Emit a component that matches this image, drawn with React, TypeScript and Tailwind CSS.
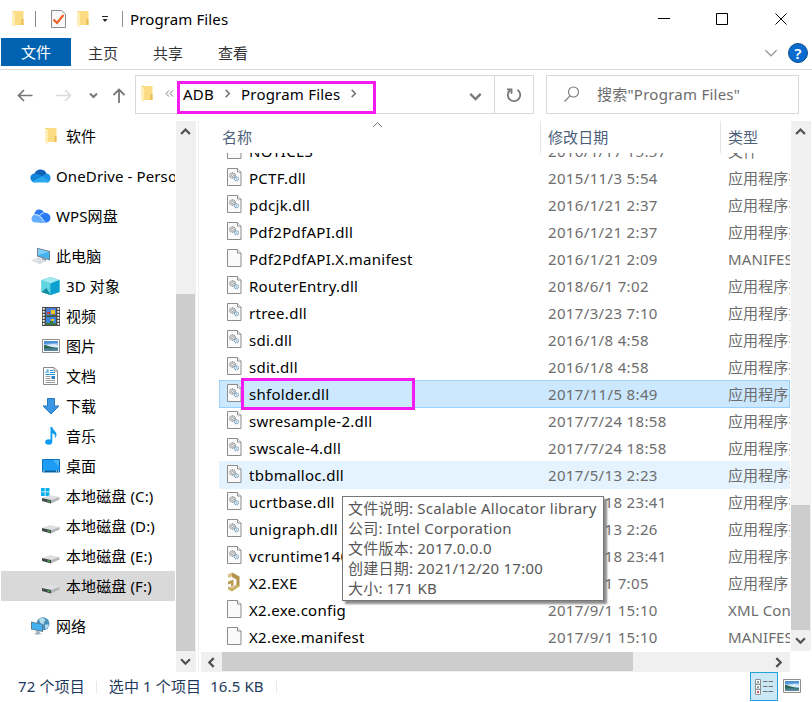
import React from "react";
import clsx from "clsx";

type FileKind = "dll" | "blank" | "exe";

type FileRow = {
  name: string;
  date: string;
  type: string;
  kind: FileKind;
  state?: "selected" | "hover";
};

const DLL = "应用程序扩展";

const files: FileRow[] = [
  { name: "NOTICES", date: "2016/1/17 15:57", type: "文件", kind: "blank" },
  { name: "PCTF.dll", date: "2015/11/3 5:54", type: DLL, kind: "dll" },
  { name: "pdcjk.dll", date: "2016/1/21 2:37", type: DLL, kind: "dll" },
  { name: "Pdf2PdfAPI.dll", date: "2016/1/21 2:37", type: DLL, kind: "dll" },
  { name: "Pdf2PdfAPI.X.manifest", date: "2016/1/21 2:09", type: "MANIFEST 文件", kind: "blank" },
  { name: "RouterEntry.dll", date: "2018/6/1 7:02", type: DLL, kind: "dll" },
  { name: "rtree.dll", date: "2017/3/23 7:10", type: DLL, kind: "dll" },
  { name: "sdi.dll", date: "2016/1/8 4:58", type: DLL, kind: "dll" },
  { name: "sdit.dll", date: "2016/1/8 4:58", type: DLL, kind: "dll" },
  { name: "shfolder.dll", date: "2017/11/5 8:49", type: DLL, kind: "dll", state: "selected" },
  { name: "swresample-2.dll", date: "2017/7/24 18:58", type: DLL, kind: "dll" },
  { name: "swscale-4.dll", date: "2017/7/24 18:58", type: DLL, kind: "dll" },
  { name: "tbbmalloc.dll", date: "2017/5/13 2:23", type: DLL, kind: "dll", state: "hover" },
  { name: "ucrtbase.dll", date: "2017/7/18 23:41", type: DLL, kind: "dll" },
  { name: "unigraph.dll", date: "2017/5/13 2:26", type: DLL, kind: "dll" },
  { name: "vcruntime140.dll", date: "2017/7/18 23:41", type: DLL, kind: "dll" },
  { name: "X2.EXE", date: "2017/9/1 7:05", type: "应用程序", kind: "exe" },
  { name: "X2.exe.config", date: "2017/9/1 15:10", type: "XML Configuration", kind: "blank" },
  { name: "X2.exe.manifest", date: "2017/9/1 15:10", type: "MANIFEST 文件", kind: "blank" },
];

const tooltipLines = [
  "文件说明: Scalable Allocator library",
  "公司: Intel Corporation",
  "文件版本: 2017.0.0.0",
  "创建日期: 2021/12/20 17:00",
  "大小: 171 KB",
];

const FolderIcon = () => (
  <svg width="14" height="18" viewBox="0 0 14 18">
    <path d="M1 1h5v14H1z" fill="#f3cd66" />
    <path d="M4 1h8.5v14H4z" fill="#fbdc85" />
    <path d="M10.5 9h2v6h-2z" fill="#e9bd53" />
    <path d="M1 1l3 1.6V17L1 15z" fill="#ffeeb5" />
  </svg>
);

const Chevron = ({
  dir,
  size = 10,
  color = "#505050",
  width = 2,
}: {
  dir: "up" | "down" | "left" | "right";
  size?: number;
  color?: string;
  width?: number;
}) => {
  const paths = {
    up: "M1 7.2 5 3.2 9 7.2",
    down: "M1 3 5 7 9 3",
    left: "M7 1 3 5 7 9",
    right: "M3 1 7 5 3 9",
  };
  return (
    <svg width={size} height={size} viewBox="0 0 10 10" fill="none" stroke={color} strokeWidth={width}>
      <path d={paths[dir]} />
    </svg>
  );
};

const PageIcon = ({ gears }: { gears?: boolean }) => (
  <svg width="15" height="18" viewBox="0 0 15 18" fill="none">
    <path d="M.5.5h10l3.500 3.500v13.500H.5z" fill="#fafafa" stroke="#8c8c8c" />
    <path d="M10.500.500V4H14" fill="#fff" stroke="#8c8c8c" />
    {gears && (
      <>
        <circle cx="5.500" cy="7.500" r="2.700" fill="#eef0f1" stroke="#84898d" strokeWidth="1.200" strokeDasharray="1.200 .5" />
        <circle cx="5.500" cy="7.500" r="1" fill="#fff" stroke="#84898d" strokeWidth=".8" />
        <circle cx="9.500" cy="10.800" r="2" fill="#eef6fb" stroke="#6f9dbb" strokeWidth="1.100" strokeDasharray="1.200 .4" />
        <circle cx="9.500" cy="10.800" r=".6" fill="#6f9dbb" />
      </>
    )}
  </svg>
);

const ExeIcon = () => (
  <svg width="15" height="20" viewBox="0 0 15 20">
    <path d="M1 2.500 5 .500v4L1 6z" fill="#d9c083" />
    <path d="M5 .500 12.500 4.500v10l-3-1.500V7.500L5 5z" fill="#b3924a" />
    <path d="M12.500 14.500 5 19.500l-4-2v-3l4 1 4.500-3z" fill="#cdb067" />
    <path d="M1 9.500 6.500 7.500v6.500L4 14.800v-3.300l-3 1z" fill="#bd9d55" />
  </svg>
);

const OneDriveIcon = () => (
  <svg width="21" height="14" viewBox="0 0 21 14">
    <path d="M4 6C5 2 8 .4 11 .5c3 .1 5 2 5.6 4.5L12 9z" fill="#0f62b5" />
    <path d="M4.3 4.5C1.6 4.8.3 6.7.4 9c.1 2.300 2 4.500 4 4.500L14 8 8 5z" fill="#1284da" />
    <path d="M11 8l5-3.500c3 0 4.500 2 4.500 4.500s-1.500 4.500-3.500 4.500z" fill="#1a93e4" />
    <path d="M2 12.500 12 7.500l7.500 4.500c-.6.900-1.500 1.500-2.500 1.500H4.500c-1 0-1.800-.300-2.500-1z" fill="#2ba9ee" />
  </svg>
);

const WpsIcon = () => (
  <svg width="20" height="14" viewBox="0 0 20 14">
    <path d="M3.500 6C3.500 2.500 5.500.500 8.200.500c2.400 0 4 1.200 4.600 3.200C16.500 3.300 19.500 5.500 19.500 9c0 2.700-2 4.500-4.500 4.500H8z" fill="#2b7bf6" />
    <path d="M4.500 5.500c2.500-.300 4.500 1 6.500 3.500l4 4.500H4.500C2 13.500.500 12 .500 9.700c0-2.200 1.600-4 4-4.200z" fill="#63adfc" />
    <path d="M4 5.800c3-.800 5.500 1.200 9 6.700" stroke="#e8f3ff" fill="none" />
    <path d="M12.500 4C10.500 4.300 9 5.500 8.500 7" stroke="#cfe3ff" fill="none" />
  </svg>
);

const ComputerIcon = () => (
  <svg width="20" height="18" viewBox="0 0 20 18">
    <path d="M6 .8 19 4v9.500L6 9.500z" fill="#6f7f8c" />
    <path d="M7 2l11 2.800v7.400L7 8.800z" fill="#45b4ef" />
    <path d="M7 2l11 2.800L7 8z" fill="#7fd0f8" />
    <path d="M11 11l4 1v2.500l-4-1z" fill="#8b969e" />
    <path d="M0 13.500 7 10.500l8 3-6 3.500z" fill="#cdd3d8" />
    <path d="M2 13.500l5-2M4 14.500l5.500-2.200M6.500 15.500l5.500-2.200" stroke="#f3f5f6" strokeWidth=".8" />
  </svg>
);

const CubeIcon = () => (
  <svg width="19" height="18" viewBox="0 0 19 18">
    <path d="M9.500 0 18.500 3v12l-9 3-9-3V3z" fill="#31c3de" />
    <path d="M9.500 0 18.500 3 9.500 6.500.500 3z" fill="#a5e9f0" />
    <path d="M.500 3 9.500 6.500V18l-9-3z" fill="#5fd5e2" />
    <path d="M.500 15l5-4 4 7z" fill="#138d9d" />
    <path d="M9.500 6.500 18.500 3v12l-9 3z" fill="#0d9fd0" />
  </svg>
);

const VideoIcon = () => (
  <svg width="18" height="19" viewBox="0 0 18 19">
    <path d="M0 0h18v19H0z" fill="#4a4a4a" />
    <path d="M4 1h10v8H4z" fill="#4b7fd6" />
    <path d="M4 10h10v8H4z" fill="#3f87dc" />
    <path d="M5 5h3v2H5zM11 7h2v2h-2z" fill="#cf3a2a" />
    <path d="M9 3h4v4H9zM9 12h3v2H9z" fill="#e7c52b" />
    <path d="M4 8h10v1H4zM8 14h3v2H8zM4 16h10v2H4z" fill="#37793c" />
    <path d="M1.700 1v18M16.300 1v18" stroke="#fff" strokeWidth="1.800" strokeDasharray="1.700 1.300" />
  </svg>
);

const PictureIcon = () => (
  <svg width="18" height="14" viewBox="0 0 18 14">
    <path d="M.500.500h17v13H.500z" fill="#fff" stroke="#8e8e8e" />
    <path d="M2 2h14v10H2z" fill="#8ec3ee" />
    <path d="M2 2h14v2L2 5z" fill="#4f91d8" />
    <path d="M5 6l7-1 4 1v2H5z" fill="#deedf6" />
    <path d="M2 6c3 0 6 2.500 14 3v1H2z" fill="#2e6755" />
    <path d="M2 9.500h14V12H2z" fill="#53869d" />
  </svg>
);

const DocumentIcon = () => (
  <svg width="15" height="18" viewBox="0 0 15 18" fill="none">
    <path d="M.500.500h10.500l3.500 3.500v13.500H.500z" fill="#fff" stroke="#8a8a8a" />
    <path d="M11 .500V4h3.500" stroke="#8a8a8a" />
    <path d="M2.500 6 5 2.500V6M7 3.500h3M7 5.500h5M2.500 7.500H12" stroke="#2196dd" />
    <path d="M2.500 9.500h5M2.500 11.500h5M2.500 13.500H12M2.500 15.500H12" stroke="#9b9b9b" />
    <path d="M8.500 9H12v3H8.500z" fill="#2583c5" />
  </svg>
);

const DownloadIcon = () => (
  <svg width="18" height="17" viewBox="0 0 18 17">
    <path d="M5.500.500h7v7.500h4.500L9 16 1 8h4.500z" fill="#3b96e6" stroke="#2877bd" />
  </svg>
);

const MusicIcon = () => (
  <svg width="12" height="18" viewBox="0 0 12 18">
    <ellipse cx="3.700" cy="15" rx="3.500" ry="2.700" fill="#109bf2" />
    <path d="M5.500 0h1.800c.200 3 4.500 4.300 4.200 8-.1 1.300-.7 2.500-1.500 3.300C11 7.500 8.500 6.500 7.300 6.200V15H5.500z" fill="#109bf2" />
  </svg>
);

const DesktopIcon = () => (
  <svg width="18" height="14" viewBox="0 0 18 14">
    <path d="M.500.500h17v12.500H.500z" fill="#1b9df5" stroke="#0c72bd" />
    <path d="M11 1h6v7z" fill="#49b5f9" />
    <path d="M1 11.500h16v1.500H1z" fill="#0c5f9f" />
    <path d="M1 12h1.500M14 12h1M16 12h1" stroke="#fff" />
  </svg>
);

const DriveIcon = ({ system }: { system?: boolean }) => (
  <svg width="19" height="18" viewBox="0 0 19 18">
    {system && <path d="M0 1h3.700v3.500H0zM4.500 1h4v3.500h-4zM0 5.300h3.700V9H0zM4.500 5.300h4V9h-4z" fill="#08b0ec" />}
    <path d="M1 11 9 8l9.500 2L10 13z" fill="#dfe0e2" />
    <path d="M1 11l9 2v3.500L1 14z" fill="#45494a" />
    <path d="M10 13l8.500-3v2.500L10 16.500z" fill="#b4b6b9" />
    <path d="M6.500 13.200l2 .5v1.300l-2-.5z" fill="#3fd33f" />
  </svg>
);

const NetworkIcon = () => (
  <svg width="19" height="18" viewBox="0 0 19 18">
    <circle cx="12" cy="6.800" r="6.500" fill="#4a90bd" />
    <path d="M8 2c2-1.500 5-1.500 6 .5s-2 2-1 4-3 1-4-1zM14 8c2-1 3-1 4 0-1 3-3 4-4 4z" fill="#b5dcec" />
    <path d="M0 4.500 12 7v8L0 12.500z" fill="#5d7d95" />
    <path d="M1 5.700 11 7.800v6L1 11.700z" fill="#44b2f1" />
    <path d="M5 13.700l4 .8v1.500l2 1-5 .7-3-1 2-1z" fill="#a9b6bf" />
  </svg>
);

const NavItem = ({
  icon,
  label,
  indent,
  active,
}: {
  icon: React.ReactNode;
  label: string;
  indent?: boolean;
  active?: boolean;
}) => (
  <li
    className={clsx(
      "flex h-[30px] items-center overflow-hidden whitespace-nowrap",
      indent ? "pl-[40px]" : "pl-[29px]",
      active && "bg-[#d9d9d9]",
    )}
  >
    <span className={clsx("flex shrink-0 justify-center", indent ? "mr-[6px] w-[19px]" : "mr-[5px] w-[21px]")}>
      {icon}
    </span>
    {label}
  </li>
);

const TitleBar = () => (
  <header className="flex h-[38px] items-center pl-[11px]">
    <FolderIcon />
    <span className="ml-[10px] h-4 w-px bg-[#8b8b8b]" />
    <svg className="ml-[15px]" width="15" height="18" viewBox="0 0 15 18" fill="none">
      <path d="M.500.500h10l4 3.500v13.500H.500z" fill="#f8f8f8" stroke="#8c8c8c" />
      <path d="M2.500 9.500 6 13l6.500-8" stroke="#ef5a1d" strokeWidth="2" />
    </svg>
    <div className="ml-[10px]">
      <FolderIcon />
    </div>
    <svg className="ml-[11px]" width="8" height="8" viewBox="0 0 8 8">
      <path d="M1 1h6v1H1zM1.500 4h5L4 7z" fill="#222" />
    </svg>
    <span className="ml-[13px] h-4 w-px bg-[#8b8b8b]" />
    <span className="ml-[7px]">Program Files</span>
    <svg className="ml-auto" width="154" height="38" viewBox="0 0 154 38" fill="none" stroke="#000">
      <path d="M0 18.500h12" />
      <path d="M58.500 13.500h11v11h-11z" />
      <path d="M117.500 13.500l11 11M128.500 13.500l-11 11" />
    </svg>
  </header>
);

const Ribbon = () => (
  <nav className="flex h-8 items-start border-b border-[#d9dadb] pl-px text-[#333]">
    <div className="flex h-7 w-[70px] items-center justify-center bg-[#0063b1] text-white">文件</div>
    <div className="flex h-7 w-[64px] items-center justify-center pt-[2px]">主页</div>
    <div className="flex h-7 w-[66px] items-center justify-center pt-[2px]">共享</div>
    <div className="flex h-7 w-[64px] items-center justify-center pt-[2px]">查看</div>
    <div className="mt-[5px] ml-auto flex items-center gap-[10px] pr-[4px]">
      <Chevron dir="down" size={14} color="#9a9a9a" width={0.9} />
      <span className="flex size-5 items-center justify-center rounded-full border border-[#0b4f8c] bg-[#0a6cce] text-[15px] font-semibold text-white">
        ?
      </span>
    </div>
  </nav>
);

const AddressBar = () => (
  <div className="flex h-[51px] items-start pt-[5px] pl-[17px]">
    <svg className="shrink-0" width="118" height="39" viewBox="0 0 118 39" fill="none" strokeWidth="2">
      <path d="M15.500 20.500H1.500M7 15l-5.500 5.500L7 26" stroke="#777" strokeWidth="1.700" />
      <path d="M39 20.500h14M48 15l5.500 5.500L48 26" stroke="#dcdcdc" strokeWidth="1.700" />
      <path d="M73 18.500l3.500 3.500 3.500-3.500" stroke="#777" />
      <path d="M102 28V15M96.500 20l5.500-5.500 5.500 5.500" stroke="#777" strokeWidth="1.800" />
    </svg>
    <div className="relative flex h-[39px] w-[399px] shrink-0 items-center border border-[#d9d9d9] pb-[2px]">
      <div className="ml-[4px]">
        <FolderIcon />
      </div>
      <svg className="ml-[11px]" width="9" height="8" viewBox="0 0 9 8" fill="none" stroke="#777">
        <path d="M4 .500 1 3.500l3 3M8 .500 5 3.500l3 3" />
      </svg>
      <span className="ml-[9px] tracking-[0.25px]">ADB</span>
      <span className="ml-[9px]">
        <Chevron dir="right" size={9} color="#777" width={1.800} />
      </span>
      <span className="ml-[9px] tracking-[0.2px]">Program Files</span>
      <span className="ml-[9px]">
        <Chevron dir="right" size={9} color="#777" width={1.800} />
      </span>
      <div className="absolute top-[5px] left-[41px] h-[33px] w-[199px] border-3 border-[#f41af0]" />
      <div className="-mb-[2px] ml-auto flex h-[37px] items-center">
        <span className="mr-[12px] pt-[3px]">
          <Chevron dir="down" size={13} color="#777" width={1.7} />
        </span>
        <span className="flex h-full w-[39px] items-center justify-center border-l border-[#d9d9d9]">
          <svg width="16" height="16" viewBox="0 0 16 16" fill="none" stroke="#777" strokeWidth="1.800">
            <path d="M11.500 2.800A6.200 6.200 0 1 1 4 3.200M1 2.300h4.500v4.500" />
          </svg>
        </span>
      </div>
    </div>
    <div className="ml-[12px] flex h-[39px] w-[253px] items-center border border-[#d9d9d9] pl-[16px] text-[#6d6d6d]">
      <svg width="18" height="17" viewBox="0 0 18 17" fill="none" stroke="#777" strokeWidth="1.100">
        <circle cx="10.500" cy="6" r="5" />
        <path d="M7 9.800 1.500 15.500" />
      </svg>
      <span className="-mt-[2px] ml-[16px] tracking-[0.25px]">搜索"Program Files"</span>
    </div>
  </div>
);

const Sidebar = () => (
  <aside className="flex w-[199px] shrink-0 border-r border-[#f0f0f0]">
    <ul className="w-[175px] pl-px">
      <NavItem indent icon={<FolderIcon />} label="软件" />
      <div className="h-[10px]" />
      <NavItem icon={<OneDriveIcon />} label="OneDrive - Personal" />
      <div className="h-[10px]" />
      <NavItem icon={<WpsIcon />} label="WPS网盘" />
      <div className="h-[10px]" />
      <NavItem icon={<ComputerIcon />} label="此电脑" />
      <NavItem indent icon={<CubeIcon />} label="3D 对象" />
      <NavItem indent icon={<VideoIcon />} label="视频" />
      <NavItem indent icon={<PictureIcon />} label="图片" />
      <NavItem indent icon={<DocumentIcon />} label="文档" />
      <NavItem indent icon={<DownloadIcon />} label="下载" />
      <NavItem indent icon={<MusicIcon />} label="音乐" />
      <NavItem indent icon={<DesktopIcon />} label="桌面" />
      <NavItem indent icon={<DriveIcon system />} label="本地磁盘 (C:)" />
      <NavItem indent icon={<DriveIcon />} label="本地磁盘 (D:)" />
      <NavItem indent icon={<DriveIcon />} label="本地磁盘 (E:)" />
      <NavItem indent active icon={<DriveIcon />} label="本地磁盘 (F:)" />
      <div className="h-[10px]" />
      <NavItem icon={<NetworkIcon />} label="网络" />
    </ul>
    <div className="ml-px flex w-5 flex-col items-center bg-[#f0f0f0] pr-px">
      <div className="flex h-[173px] items-start pt-[5px]">
        <Chevron dir="up" size={11} />
      </div>
      <div className="h-[357px] w-[19px] self-start bg-[#cdcdcd]" />
      <div className="flex flex-1 items-center">
        <Chevron dir="down" size={11} />
      </div>
    </div>
  </aside>
);

const FileIcon = ({ kind }: { kind: FileKind }) => {
  if (kind === "exe") return <ExeIcon />;
  return <PageIcon gears={kind === "dll"} />;
};

const Row = ({ file }: { file: FileRow }) => (
  <li
    className={clsx(
      "relative grid shrink-0 grid-cols-[321px_180px_1fr] items-center whitespace-nowrap",
      file.state ? "-mb-px h-7 pb-px" : "h-[27px]",
      file.state === "selected" && "bg-[#cce8ff] outline outline-[#99d1ff] -outline-offset-1",
      file.state === "hover" && "bg-[#e5f3ff]",
    )}
  >
    <div className="flex items-center pl-2 tracking-[0.28px]">
      <span className="mr-[7px] -mt-[2px]">
        <FileIcon kind={file.kind} />
      </span>
      {file.name}
    </div>
    <div className="pl-2 tracking-[0.35px] text-[#6d6d6d]">{file.date}</div>
    <div className="overflow-hidden pl-2 text-[#6d6d6d]">{file.type}</div>
    {file.state === "selected" && (
      <div className="absolute -top-[2px] left-[22px] z-10 h-8 w-[174px] border-3 border-[#f41af0]" />
    )}
  </li>
);

const Tooltip = () => (
  <div className="absolute top-[375px] left-[143px] z-20 h-[105px] w-[262px] border border-[#767676] bg-white pt-px pl-[5px] tracking-[0.23px] whitespace-nowrap text-[#575757] shadow-[3px_3px_2px_rgba(0,0,0,0.45)]">
    {tooltipLines.map((line) => (
      <p key={line} className="leading-5">
        {line}
      </p>
    ))}
  </div>
);

const FileList = () => (
  <main className="relative flex min-w-0 flex-1">
    <div className="flex min-w-0 flex-1 flex-col">
      <div className="relative ml-5 grid h-8 shrink-0 grid-cols-[321px_180px_1fr] items-center text-[#4c607a]">
        <div className="pl-[3px]">名称</div>
        <div className="flex h-full items-center border-l border-[#e5e5e5] pl-[7px]">修改日期</div>
        <div className="flex h-full items-center border-l border-[#e5e5e5] pl-[7px]">类型</div>
        <span className="absolute -top-[2px] left-[153px]">
          <Chevron dir="up" size={11} color="#777" width={0.9} />
        </span>
      </div>
      <div className="ml-5 h-[498px] overflow-hidden">
        <ul className="-mt-4 flex flex-col">
          {files.map((file) => (
            <Row key={file.name} file={file} />
          ))}
        </ul>
      </div>
      <div className="mt-px ml-[2px] flex h-5 items-center bg-[#f0f0f0]">
        <span className="flex w-[21px] justify-center pr-px">
          <Chevron dir="left" size={11} />
        </span>
        <div className="h-[19px] w-[411px] self-start bg-[#cdcdcd]" />
        <span className="mr-[6px] ml-auto">
          <Chevron dir="right" size={11} />
        </span>
      </div>
    </div>
    <div className="mr-[1px] ml-[1px] flex h-[530px] w-5 flex-col items-center bg-[#f0f0f0] pr-px">
      <div className="flex h-[384px] items-start pt-[5px]">
        <Chevron dir="up" size={11} />
      </div>
      <div className="h-[125px] w-[19px] self-start bg-[#cdcdcd]" />
      <div className="flex flex-1 items-center">
        <Chevron dir="down" size={11} />
      </div>
    </div>
    <Tooltip />
  </main>
);

const StatusBar = () => (
  <footer className="flex h-[30px] items-start pr-[11px] pl-[18px] text-[#1e395b]">
    <span className="mt-1">72 个项目</span>
    <span className="mt-[9px] ml-[11px] h-3 w-px bg-[#e8e8e8]" />
    <span className="mt-1 ml-[12px]">选中 1 个项目</span>
    <span className="mt-1 ml-[9px]">16.5 KB</span>
    <span className="mt-[9px] ml-[12px] h-3 w-px bg-[#e8e8e8]" />
    <div className="ml-auto flex h-[29px] w-7 items-center justify-center border border-[#26a0da] bg-[#cbe8f6]">
      <svg width="19" height="16" viewBox="0 0 19 16" fill="none">
        <path d="M.500.500h5v4.800h-5zM.500 5.300h5v5h-5zM.500 10.300h5v5h-5z" fill="#fff" stroke="#8d8d8d" />
        <path d="M2 2.200h2v1.600H2z" fill="#4c8a78" />
        <path d="M2 7.200h2v1.600H2z" fill="#6b7a86" />
        <path d="M2 12.200h2v1.600H2z" fill="#c22" />
        <path d="M8 2.500h4.500M13.500 2.500H18M8 7.500h4.500M13.500 7.500H18M8 12.500h4.500M13.500 12.500H18" stroke="#707070" />
      </svg>
    </div>
    <div className="mt-[7px] ml-[5px]">
      <PictureIcon />
    </div>
  </footer>
);

const App = () => {
  return (
    <div className="flex h-[702px] w-[812px] flex-col overflow-hidden bg-white font-['Noto_Sans','Noto_Sans_CJK_SC',sans-serif] text-[15px] leading-5 tracking-[0.12px] text-black">
      <TitleBar />
      <Ribbon />
      <AddressBar />
      <div className="flex h-[551px] shrink-0">
        <Sidebar />
        <FileList />
      </div>
      <StatusBar />
    </div>
  );
};

export default App;
